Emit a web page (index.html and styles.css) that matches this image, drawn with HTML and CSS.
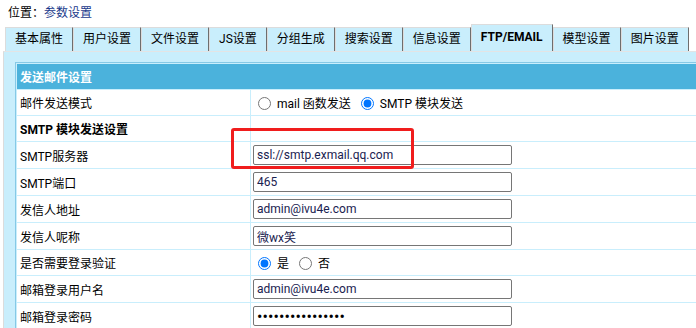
FILE: index.html
```html
<!DOCTYPE html>
<html lang="zh-CN">
<head>
    <meta charset="UTF-8">
    <title>参数设置</title>
    <link rel="stylesheet" href="styles.css">
</head>
<body>
    <div class="location">位置：<a href="#">参数设置</a></div>

    <div class="tabs">
        <span class="tab">基本属性</span>
        <span class="tab">用户设置</span>
        <span class="tab">文件设置</span>
        <span class="tab">JS设置</span>
        <span class="tab">分组生成</span>
        <span class="tab">搜索设置</span>
        <span class="tab">信息设置</span>
        <span class="tab active">FTP/EMAIL</span>
        <span class="tab">模型设置</span>
        <span class="tab">图片设置</span>
    </div>

    <div class="panel">
        <table class="form-table">
            <tr>
                <th colspan="2">发送邮件设置</th>
            </tr>
            <tr>
                <td class="label">邮件发送模式</td>
                <td>
                    <label><input type="radio" name="mode"> mail 函数发送</label>
                    <label><input type="radio" name="mode" checked> SMTP 模块发送</label>
                </td>
            </tr>
            <tr>
                <td class="label sub">SMTP 模块发送设置</td>
                <td></td>
            </tr>
            <tr>
                <td class="label">SMTP服务器</td>
                <td><input class="field" type="text" value="ssl://smtp.exmail.qq.com"></td>
            </tr>
            <tr>
                <td class="label">SMTP端口</td>
                <td><input class="field" type="text" value="465"></td>
            </tr>
            <tr>
                <td class="label">发信人地址</td>
                <td><input class="field" type="text" value="admin@ivu4e.com"></td>
            </tr>
            <tr>
                <td class="label">发信人呢称</td>
                <td><input class="field" type="text" value="微wx笑"></td>
            </tr>
            <tr>
                <td class="label">是否需要登录验证</td>
                <td>
                    <label><input type="radio" name="auth" checked> 是</label>
                    <label><input type="radio" name="auth"> 否</label>
                </td>
            </tr>
            <tr>
                <td class="label">邮箱登录用户名</td>
                <td><input class="field" type="text" value="admin@ivu4e.com"></td>
            </tr>
            <tr>
                <td class="label">邮箱登录密码</td>
                <td><input class="field pass" type="password" value="abcdefghijklmnop"></td>
            </tr>
        </table>
    </div>

    <!-- annotation box around the smtp server field -->
    <div class="mark"></div>
</body>
</html>
```

FILE: styles.css
```css
html, body {
    margin: 0;
    padding: 0;
    overflow: hidden;
}
body {
    font-family: Roboto, "Noto Sans CJK SC", sans-serif;
    font-size: 12px;
    color: #000;
    background: #fff;
    position: relative;
    width: 696px;
    height: 328px;
}
.location {
    height: 24px;
    line-height: 26px;
    padding-left: 8px;
}
.location a {
    color: #1a3a8c;
    text-decoration: none;
}
.tabs {
    display: flex;
    align-items: flex-end;
    height: 27px;
    margin-left: 5px;
}
.tab {
    height: 23px;
    line-height: 23px;
    padding: 0 9px;
    background: #c9eefc;
    border-top: 1px solid #dcdcdc;
    border-left: 1px solid #dcdcdc;
    border-right: 1px solid #6e6e6e;
    white-space: nowrap;
}
.tab.active {
    height: 26px;
    line-height: 24px;
    padding: 0 9px;
    font-weight: bold;
}
.panel {
    margin-left: 3px;
    background: #c9eefc;
    border-top: 1px solid #e4e4e4;
    border-left: 1px solid #dcdcdc;
    padding: 10px 0 0 11px;
    height: 266px;
}
.form-table {
    width: 900px;
    border: 1px solid #86c9e6;
    border-spacing: 1px;
    background: #c9eefc;
}
.form-table th {
    background: #4bb2dc;
    color: #fff;
    text-align: left;
    height: 25px;
    padding: 0 0 0 3px;
    font-weight: bold;
}
.form-table td {
    background: #fff;
    height: 25px;
    padding: 0 2px;
}
.form-table td.label {
    width: 228px;
    padding-left: 3px;
}
.form-table td.sub {
    font-weight: bold;
}
.form-table label {
    margin-right: 2px;
}
.form-table input[type=radio] {
    margin: 0 3px 0 5px;
    vertical-align: -2px;
}
.field {
    box-sizing: border-box;
    width: 259px;
    height: 20px;
    margin: 3px 0;
    padding: 0 3px;
    border: 1px solid #767676;
    border-radius: 2px;
    font-family: Roboto, "Noto Sans CJK SC", sans-serif;
    font-size: 12px;
    color: #1a2250;
    vertical-align: middle;
}
.field.pass {
    font-size: 16px;
    letter-spacing: 0.1px;
    color: #000;
}
.mark {
    position: absolute;
    left: 231px;
    top: 128px;
    width: 177px;
    height: 35px;
    border: 3px solid #f01d1d;
    border-radius: 3px;
}
```
